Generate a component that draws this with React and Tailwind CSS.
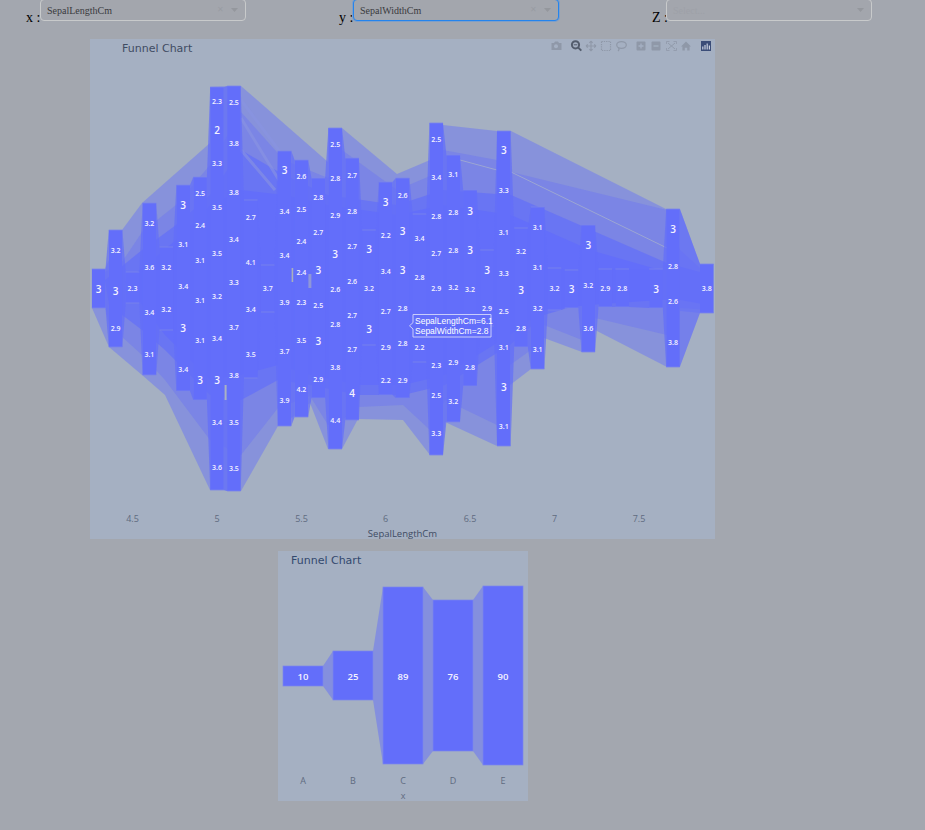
const columns = [
  { x: 98.7, top: 269, bot: 308, labels: [[289, "3"]] },
  { x: 115.6, top: 230, bot: 347, labels: [[250, "3.2"], [291, "3"], [328, "2.9"]] },
  { x: 132.5, top: 272, bot: 303, labels: [[288, "2.3"]] },
  { x: 149.4, top: 203, bot: 375, labels: [[223, "3.2"], [267, "3.6"], [312, "3.4"], [354, "3.1"]] },
  { x: 166.3, top: 247, bot: 330, labels: [[267, "3.2"], [309, "3.2"]] },
  { x: 183.2, top: 185, bot: 391, labels: [[205, "3"], [244, "3.1"], [286, "3.4"], [328, "3"], [369, "3.4"]] },
  { x: 200.1, top: 177, bot: 400, labels: [[193, "2.5"], [225, "2.4"], [260, "3.1"], [300, "3.1"], [340, "3.1"], [380, "3"]] },
  { x: 217, top: 87, bot: 490, labels: [[101, "2.3"], [130, "2"], [163, "3.3"], [207, "3.5"], [253, "3.5"], [296, "3.2"], [338, "3.4"], [380, "3"], [422, "3.4"], [467, "3.6"]] },
  { x: 233.9, top: 86, bot: 491, labels: [[102, "2.5"], [143, "3.8"], [192, "3.8"], [239, "3.4"], [282, "3.3"], [327, "3.7"], [375, "3.8"], [422, "3.5"], [468, "3.5"]] },
  { x: 250.8, top: 200, bot: 378, labels: [[217, "2.7"], [262, "4.1"], [309, "3.4"], [354, "3.5"]] },
  { x: 267.7, top: 265, bot: 312, labels: [[288, "3.7"]] },
  { x: 284.5, top: 151, bot: 426, labels: [[170, "3"], [211, "3.4"], [255, "3.4"], [302, "3.9"], [351, "3.7"], [400, "3.9"]] },
  { x: 301.4, top: 160, bot: 417, labels: [[176, "2.6"], [209, "2.5"], [241, "2.4"], [272, "2.4"], [302, "2.3"], [340, "3.5"], [389, "4.2"]] },
  { x: 318.3, top: 178, bot: 398, labels: [[197, "2.8"], [232, "2.7"], [270, "3"], [305, "2.5"], [341, "3"], [379, "2.9"]] },
  { x: 335.2, top: 128, bot: 449, labels: [[144, "2.5"], [178, "2.8"], [215, "2.9"], [254, "3"], [289, "2.6"], [324, "2.8"], [367, "3.8"], [420, "4.4"]] },
  { x: 352.1, top: 158, bot: 420, labels: [[175, "2.7"], [211, "2.8"], [246, "2.7"], [281, "2.6"], [315, "2.7"], [349, "2.7"], [393, "4"]] },
  { x: 369, top: 230, bot: 345, labels: [[249, "3"], [288, "3.2"], [329, "3"]] },
  { x: 385.7, top: 182, bot: 395, labels: [[202, "3"], [235, "2.2"], [271, "3.4"], [311, "2.7"], [347, "2.9"], [380, "2.2"]] },
  { x: 402.6, top: 178, bot: 398, labels: [[195, "2.6"], [231, "3"], [270, "3"], [308, "2.8"], [343, "2.8"], [380, "2.9"]] },
  { x: 419.5, top: 214, bot: 362, labels: [[238, "3.4"], [277, "2.8"], [347, "2.2"]] },
  { x: 436.2, top: 123, bot: 455, labels: [[139, "2.5"], [177, "3.4"], [216, "2.8"], [253, "2.7"], [288, "2.9"], [365, "2.3"], [395, "2.5"], [433, "3.3"]] },
  { x: 453.2, top: 155, bot: 422, labels: [[174, "3.1"], [212, "2.8"], [250, "2.8"], [287, "3.2"], [362, "2.9"], [401, "3.2"]] },
  { x: 470, top: 190, bot: 386, labels: [[211, "3"], [250, "3"], [289, "3.2"], [367, "2.8"]] },
  { x: 487, top: 250, bot: 326, labels: [[270, "3"], [308, "2.9"]] },
  { x: 503.8, top: 131, bot: 446, labels: [[150, "3"], [190, "3.3"], [232, "3.1"], [273, "3.3"], [311, "2.5"], [347, "3.1"], [387, "3"], [426, "3.1"]] },
  { x: 521, top: 228, bot: 347, labels: [[251, "3.2"], [290, "3"], [328, "2.8"]] },
  { x: 537.6, top: 207, bot: 369, labels: [[227, "3.1"], [267, "3.1"], [308, "3.2"], [349, "3.1"]] },
  { x: 554.5, top: 268, bot: 310, labels: [[288, "3.2"]] },
  { x: 571.5, top: 270, bot: 308, labels: [[289, "3"]] },
  { x: 588.3, top: 225, bot: 352, labels: [[245, "3"], [285, "3.2"], [328, "3.6"]] },
  { x: 605.3, top: 269, bot: 307, labels: [[288, "2.9"]] },
  { x: 622.2, top: 269, bot: 307, labels: [[288, "2.8"]] },
  { x: 656, top: 269, bot: 308, labels: [[289, "3"]] },
  { x: 673, top: 209, bot: 367, labels: [[229, "3"], [266, "2.8"], [301, "2.6"], [342, "3.8"]] },
  { x: 706.8, top: 264, bot: 313, labels: [[288, "3.8"]] },
];

const outerHull =
  "92,269 105,269 122,230 142,203 210,143 210,87 241,86 328,162 328,128 342,128 397,174 430,160 443,125 497,131 511,131 666,209 680,209 700,264 713,264 713,313 700,313 680,311 680,367 667,367 595,330 582,352 544,338 531,369 510,385 510,446 497,446 445,422 443,455 430,455 403,420 358,419 342,449 328,449 310,403 293,417 278,426 241,491 227,491 223,490 210,490 165,395 142,375 109,347 92,308";
const midHull =
  "105,272 122,262 142,232 176,205 210,165 241,112 284,160 328,178 342,150 397,190 430,176 443,150 497,160 511,172 667,210 680,250 700,268 713,270 713,310 680,308 667,335 595,318 582,340 544,325 531,350 510,365 497,425 445,400 430,430 403,405 358,407 342,420 328,425 310,396 278,408 241,455 210,440 165,380 142,355 109,325 105,305";
const innerHull =
  "105,280 142,250 176,225 210,195 241,150 284,175 328,195 397,205 443,190 511,195 667,263 700,272 713,276 713,306 680,300 595,300 544,315 510,345 445,385 403,395 358,395 310,385 278,380 241,400 210,395 165,350 142,330 109,305";
const denseHull =
  "125,282 176,240 210,205 241,190 284,195 328,205 397,215 443,205 511,215 590,250 660,270 660,300 590,305 544,310 510,335 445,375 403,385 358,385 310,375 278,365 241,375 210,380 165,335 142,305";

function Bars() {
  return columns.map((c, i) => {
    const next = columns[i + 1];
    return (
      <g key={c.x}>
        {next && (
          <polygon
            points={`${c.x + 6.8},${c.top} ${next.x - 6.8},${next.top} ${next.x - 6.8},${next.bot} ${c.x + 6.8},${c.bot}`}
            fill="#636efa"
            fillOpacity="0.72"
          />
        )}
        <rect x={c.x - 6.8} y={c.top} width="13.6" height={c.bot - c.top} fill="#636efa" />
        <path d={`M${c.x - 6.8} ${c.top}h13.6M${c.x - 6.8} ${c.bot}h13.6`} stroke="#7c86ea" strokeWidth="0.8" />
      </g>
    );
  });
}

function Labels() {
  return columns.map((c) =>
    c.labels.map(([y, t]) => (
      <text
        key={y}
        x={c.x}
        y={y + (t.length === 1 ? 3.5 : 2.5)}
        textAnchor="middle"
        fill="#f4f2ff"
        className={t.length === 1 ? "font-['Open_Sans'] text-[10px] font-semibold" : "font-['Open_Sans'] text-[7px] font-semibold"}
      >
        {t}
      </text>
    ))
  );
}

function Modebar() {
  const grey = "#8f98a8";
  return (
    <g>
      {/* camera */}
      <path d="M551.5 43h2.5l1-1.5h3l1 1.5h2.5v7h-10z" fill={grey} />
      <circle cx="556" cy="46.2" r="2" fill="#a5b0c2" />
      {/* zoom, active */}
      <circle cx="575.5" cy="44.8" r="3.6" fill="#a5b0c2" stroke="#535c6c" strokeWidth="2" />
      <path d="M578.3 47.6l3 3" stroke="#535c6c" strokeWidth="2" />
      <path d="M573.7 44.8h3.6" stroke="#535c6c" strokeWidth="1" />
      {/* pan */}
      <path d="M591 41v10M586 46h10M591 41l-1.6 1.8M591 41l1.6 1.8M591 51l-1.6-1.8M591 51l1.6-1.8M586 46l1.8-1.6M586 46l1.8 1.6M596 46l-1.8-1.6M596 46l-1.8 1.6" stroke={grey} strokeWidth="1.1" fill="none" />
      {/* box select */}
      <rect x="601.5" y="41.5" width="9" height="9" fill="none" stroke={grey} strokeWidth="1.2" strokeDasharray="1.3 1" />
      {/* lasso */}
      <ellipse cx="621.5" cy="45" rx="4.8" ry="3.4" fill="none" stroke={grey} strokeWidth="1.2" />
      <path d="M618.5 47.5c.8 1.2.6 2.6-.5 3.6" fill="none" stroke={grey} strokeWidth="1.2" />
      {/* zoom in / out */}
      <rect x="636.5" y="41.5" width="9" height="9" rx="1" fill={grey} />
      <path d="M638.5 46h5M641 43.5v5" stroke="#a5b0c2" strokeWidth="1.3" />
      <rect x="651.5" y="41.5" width="9" height="9" rx="1" fill={grey} />
      <path d="M653.5 46h5" stroke="#a5b0c2" strokeWidth="1.3" />
      {/* autoscale */}
      <path d="M668 43l7 6M675 43l-7 6" stroke={grey} strokeWidth="0.9" />
      <path d="M666.5 44v-2.5h3M673.5 41.5h3v2.5M676.5 48v2.5h-3M669.5 50.5h-3v-2.5" stroke={grey} strokeWidth="0.8" fill="none" />
      {/* home */}
      <path d="M681 46.4l5-4.9 5 4.9h-1.4v4.2h-2.4v-2.8h-2.4v2.8h-2.4v-4.2z" fill={grey} />
      {/* plotly logo */}
      <rect x="701" y="41" width="10" height="10" fill="#3b4d78" />
      <path d="M702.8 46.5v3M705 45v4.5M707.2 43.5v6M709.4 45.5v4" stroke="#c9d0e0" strokeWidth="1.2" />
    </g>
  );
}

function FunnelChart() {
  const ticks = [[132.5, "4.5"], [217, "5"], [301.5, "5.5"], [385.5, "6"], [470, "6.5"], [554.5, "7"], [639, "7.5"]];
  return (
    <div className="w-[625px] h-[500px] ml-[90px] mt-[18px] bg-[#a5b0c2]">
      <svg viewBox="90 39 625 500" width="625" height="500" className="block">
        <polygon points={outerHull} fill="#636efa" fillOpacity="0.45" />
        <polygon points={midHull} fill="#636efa" fillOpacity="0.35" />
        <polygon points={innerHull} fill="#636efa" fillOpacity="0.7" />
        <polygon points={denseHull} fill="#636efa" />
        <path d="M460 160L497 170M511 172L667 248" stroke="#aab4cc" strokeWidth="1" opacity="0.7" />
        <path d="M241 100L290 165M241 118L285 190M241 150L275 190" stroke="#8a94e2" strokeWidth="3" opacity="0.6" />
        <Bars />
        <rect x="224.6" y="385" width="2" height="15" fill="#aab2c4" />
        <rect x="291.6" y="268" width="1.6" height="14" fill="#a9b0bc" />
        <rect x="308.4" y="274" width="3" height="14" fill="#8f97d8" />
        <Labels />
        <Modebar />
        <text x="122" y="52" fill="#3f4c62" className="font-['DejaVu_Sans'] text-[11px]">Funnel Chart</text>
        {ticks.map(([x, t]) => (
          <text key={t} x={x} y="522" textAnchor="middle" fill="#5f6b80" className="font-['Open_Sans'] text-[9px]">{t}</text>
        ))}
        <text x="402.5" y="537" textAnchor="middle" fill="#3f4c62" className="font-['Open_Sans'] text-[9.5px]">SepalLengthCm</text>
        {/* hover label */}
        <path d="M413 314.5h78v22.5h-78v-8l-3.5-3.2 3.5-3.2z" fill="#636efa" stroke="#c9cdfb" strokeWidth="1" />
        <text x="415" y="323.5" fill="#ffffff" className="font-['Liberation_Sans'] text-[8.5px]">SepalLengthCm=6.1</text>
        <text x="415" y="333.5" fill="#ffffff" className="font-['Liberation_Sans'] text-[8.5px]">SepalWidthCm=2.8</text>
      </svg>
    </div>
  );
}

function SmallFunnel() {
  const bars = [
    { n: "A", v: "10", x: 283, t: 666, b: 686 },
    { n: "B", v: "25", x: 333, t: 651, b: 700 },
    { n: "C", v: "89", x: 383, t: 587, b: 764 },
    { n: "D", v: "76", x: 433, t: 600, b: 751 },
    { n: "E", v: "90", x: 483, t: 586, b: 765 },
  ];
  return (
    <div className="w-[250px] h-[250px] ml-[278px] mt-[12px] bg-[#a5b0c2]">
      <svg viewBox="278 551 250 250" width="250" height="250" className="block">
        {bars.slice(0, -1).map((b, i) => {
          const n = bars[i + 1];
          return (
            <polygon
              key={b.n}
              points={`${b.x + 40},${b.t} ${n.x},${n.t} ${n.x},${n.b} ${b.x + 40},${b.b}`}
              fill="#636efa"
              fillOpacity="0.5"
            />
          );
        })}
        {bars.map((b) => (
          <g key={b.n}>
            <rect x={b.x} y={b.t} width="40" height={b.b - b.t} fill="#636efa" stroke="#7c86ea" strokeWidth="0.7" />
            <text x={b.x + 20} y="679.5" textAnchor="middle" fill="#f4f2ff" className="font-['Open_Sans'] text-[9.5px] font-semibold">{b.v}</text>
            <text x={b.x + 20} y="784" textAnchor="middle" fill="#5f6b80" className="font-['Open_Sans'] text-[9px]">{b.n}</text>
          </g>
        ))}
        <text x="291" y="564" fill="#33496e" className="font-['DejaVu_Sans'] text-[11px]">Funnel Chart</text>
        <text x="403" y="799" textAnchor="middle" fill="#5f6b80" className="font-['Open_Sans'] text-[9px]">x</text>
      </svg>
    </div>
  );
}

function Select({ label, value, focused }) {
  return (
    <div className="flex items-end">
      <span className="w-[14px] font-['Liberation_Serif'] text-[14px] leading-[18px] text-black whitespace-nowrap mb-[-6px]">{label}</span>
      <div
        className={
          focused
            ? "w-[206px] h-[22px] flex items-center rounded-[4px] border border-[#2484ed] shadow-[0_0_0_1px_#7f9fc8] bg-[#a3a6ad] pl-[6px] pr-[4px]"
            : "w-[206px] h-[22px] flex items-center rounded-[4px] border border-[#c8cacb] bg-[#a3a6ad] pl-[6px] pr-[4px]"
        }
      >
        <span className={value ? "flex-1 font-['Liberation_Serif'] text-[10px] text-[#3a3a3e]" : "flex-1 font-['Liberation_Serif'] text-[10px] text-[#9ea1a8]"}>
          {value || "Select..."}
        </span>
        {value && <span className="font-['Liberation_Sans'] text-[8px] text-[#999ca3] mr-[7px]">✕</span>}
        <svg width="7" height="4" viewBox="0 0 7 4" className="mr-[3px]">
          <path d="M0 0h7L3.5 4z" fill="#94979d" />
        </svg>
      </div>
    </div>
  );
}

export default function App() {
  return (
    <div className="min-h-[830px] overflow-hidden bg-[#a3a7af]">
      <div className="-mt-px pl-[26px] grid grid-cols-[313px_313px_313px]">
        <Select label="x :" value="SepalLengthCm" />
        <Select label="y :" value="SepalWidthCm" focused />
        <Select label="Z :" value="" />
      </div>
      <FunnelChart />
      <SmallFunnel />
    </div>
  );
}
